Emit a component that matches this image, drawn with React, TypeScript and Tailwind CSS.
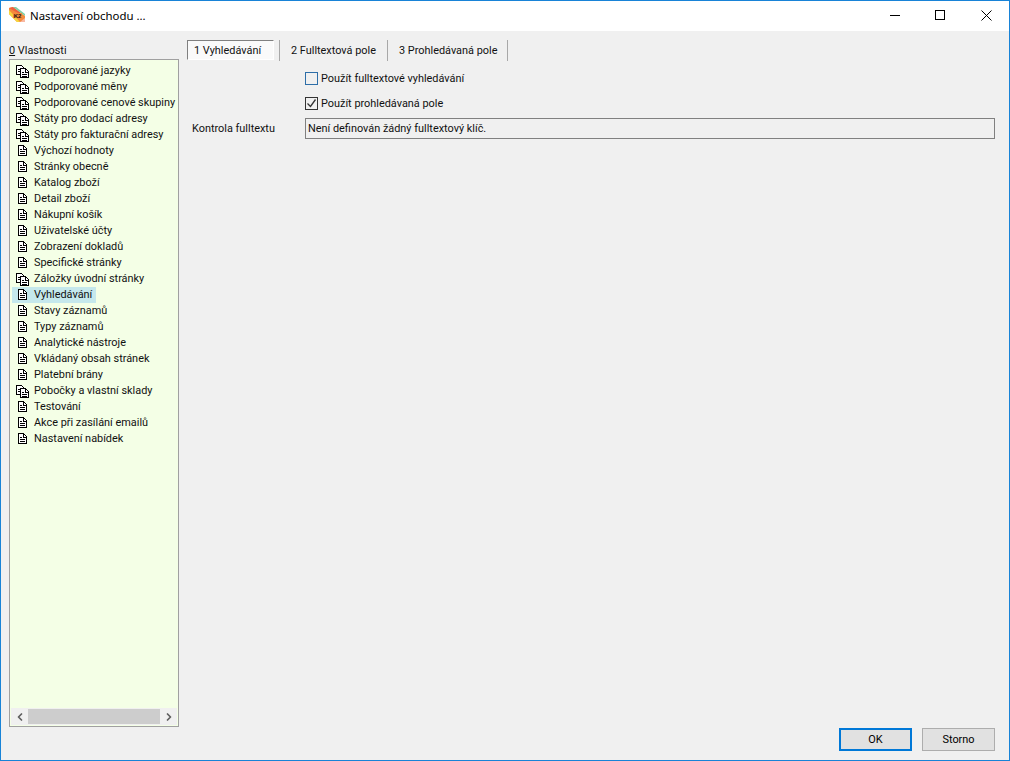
import { ChevronLeft, ChevronRight } from "lucide-react"

const items = [
  { label: "Podporované jazyky", multi: true },
  { label: "Podporované měny", multi: true },
  { label: "Podporované cenové skupiny", multi: true },
  { label: "Státy pro dodací adresy", multi: true },
  { label: "Státy pro fakturační adresy", multi: true },
  { label: "Výchozí hodnoty" },
  { label: "Stránky obecně" },
  { label: "Katalog zboží" },
  { label: "Detail zboží" },
  { label: "Nákupní košík" },
  { label: "Uživatelské účty" },
  { label: "Zobrazení dokladů" },
  { label: "Specifické stránky" },
  { label: "Záložky úvodní stránky", multi: true },
  { label: "Vyhledávání", active: true },
  { label: "Stavy záznamů" },
  { label: "Typy záznamů" },
  { label: "Analytické nástroje" },
  { label: "Vkládaný obsah stránek" },
  { label: "Platební brány" },
  { label: "Pobočky a vlastní sklady", multi: true },
  { label: "Testování" },
  { label: "Akce při zasílání emailů" },
  { label: "Nastavení nabídek" },
]

const DocIcon = () => (
  <svg width="16" height="16" viewBox="0 0 16 16" shapeRendering="crispEdges" className="shrink-0">
    <path d="M3.5 2.5h5l3 3v7h-8z" fill="#fff" stroke="#000" />
    <path d="M8 3v3h3M5 6.5h2M5 8.5h5M5 10.5h5" stroke="#000" fill="none" />
  </svg>
)

const DocsIcon = () => (
  <svg width="16" height="16" viewBox="0 0 16 16" shapeRendering="crispEdges" className="shrink-0">
    <path d="M1.5 2.5h5l2 2v7h-7z" fill="#fff" stroke="#000" />
    <path d="M3 6.5h2M3 8.5h2" stroke="#000" />
    <path d="M5.5 5.5h5l3 3v6h-8z" fill="#fff" stroke="#000" />
    <path d="M10 6v3h3M7 9.5h2M7 11.5h5M7 13.5h5" stroke="#000" fill="none" />
  </svg>
)

const K2Logo = () => (
  <svg width="16" height="16" viewBox="0 0 16 16" className="shrink-0">
    <path d="M0 1L4 0L16 9V15H8L0 7z" fill="#f58a3c" />
    <path d="M0 3V7L8 15H11z" fill="#f5d63d" />
    <path d="M0 1L4 0L12 6L9 6z" fill="#ee5f3f" />
    <path d="M4 0L7 0L16 7V9z" fill="#7fcfa6" />
    <path d="M11 15L16 11V15z" fill="#f8b8a2" />
    <rect x="4" y="6" width="9" height="5" fill="#f58a3c" />
    <text x="8.5" y="10.6" textAnchor="middle" fontSize="6" fontWeight="700" fill="#1f1510" fontFamily="'Liberation Sans', sans-serif">K2</text>
  </svg>
)

export default function App() {
  return (
    <div className="w-[1010px] h-[761px] flex flex-col border border-[#1883d7] bg-[#f0f0f0] text-[10.9px] text-[#111] font-['Roboto','Liberation_Sans',sans-serif] overflow-hidden">
      {/* Title bar */}
      <div className="h-[30px] bg-white flex items-center shrink-0">
        <div className="ml-[8px] mb-[2px]"><K2Logo /></div>
        <span className="ml-[5px] text-[11.4px] font-['Noto_Sans',sans-serif] text-black">Nastavení obchodu ...</span>
        <div className="ml-auto flex items-center pb-[2px]">
          <div className="w-[44px] h-[28px] flex items-center justify-center">
            <div className="w-[10px] h-px bg-black" />
          </div>
          <div className="w-[46px] h-[28px] flex items-center justify-center">
            <div className="w-[10px] h-[10px] border border-black" />
          </div>
          <div className="w-[46px] h-[28px] flex items-center justify-center">
            <svg width="11" height="11" viewBox="0 0 11 11">
              <path d="M.5.5l10 10M10.5.5l-10 10" stroke="#000" fill="none" />
            </svg>
          </div>
        </div>
      </div>

      {/* Body */}
      <div className="flex-1 flex pl-[8px] pr-[14px] min-h-0">
        {/* Left list */}
        <div className="w-[170px] flex flex-col shrink-0 pb-[33px]">
          <div className="h-[28px] pt-[12px] leading-[16px] shrink-0"><span className="underline">0</span> Vlastnosti</div>
          <div className="flex-1 flex flex-col border border-[#a0a0a0] bg-[#f4ffe6] min-h-0 p-px">
            <div className="flex-1 pt-[2px]">
              {items.map((item) => (
                <div key={item.label} className="h-[16px] flex items-center whitespace-nowrap pl-px">
                  <div className={`flex items-center h-[16px] pl-[3px] pr-[4px] ${item.active ? "bg-[#c5e8ec]" : ""}`}>
                    {item.multi ? <DocsIcon /> : <DocIcon />}
                    <span className="ml-[3px] leading-[16px]">{item.label}</span>
                  </div>
                </div>
              ))}
            </div>
            <div className="h-[17px] bg-[#f0f0f0] flex items-center shrink-0">
              <div className="w-[17px] flex justify-center"><ChevronLeft size={12} strokeWidth={3.5} color="#606060" /></div>
              <div className="flex-1 h-[15px] bg-[#cdcdcd]" />
              <div className="w-[17px] flex justify-center"><ChevronRight size={12} strokeWidth={3.5} color="#606060" /></div>
            </div>
          </div>
        </div>

        {/* Right panel */}
        <div className="flex-1 flex flex-col ml-[8px] min-w-0">
          <div className="flex items-center h-[22px] mt-[8px] shrink-0">
            <div className="w-[87px] h-[20px] flex items-center pl-[6px] pt-[2px] bg-[#fafafa] border border-t-[#808080] border-l-[#808080] border-b-white border-r-white">1 Vyhledávání</div>
            <div className="w-px h-[21px] bg-[#a8a8a8] ml-[5px]" />
            <div className="w-[107px] pl-[11px] pt-[2px] whitespace-nowrap">2 Fulltextová pole</div>
            <div className="w-px h-[21px] bg-[#a8a8a8]" />
            <div className="w-[119px] pl-[11px] pt-[2px] whitespace-nowrap">3 Prohledávaná pole</div>
            <div className="w-px h-[21px] bg-[#a8a8a8]" />
          </div>

          <div className="flex items-center mt-[9px] ml-[118px] h-[16px]">
            <div className="w-[13px] h-[13px] border border-[#2d6ea8] bg-[#f0f0f0]" />
            <span className="ml-[3px] pt-[2px]">Použít fulltextové vyhledávání</span>
          </div>
          <div className="flex items-center mt-[9px] ml-[118px] h-[16px]">
            <div className="w-[13px] h-[13px] border border-[#333] bg-[#f0f0f0] flex items-center justify-center">
              <svg width="11" height="11" viewBox="0 0 11 11">
                <path d="M1.5 5.5l3 3 5-7" stroke="#333" strokeWidth="1.3" fill="none" />
              </svg>
            </div>
            <span className="ml-[3px] pt-[2px]">Použít prohledávaná pole</span>
          </div>

          <div className="flex items-center mt-[7px] h-[21px]">
            <span className="w-[118px] pl-[5px] pt-[2px] shrink-0">Kontrola fulltextu</span>
            <div className="flex-1 h-[21px] border border-[#808080] flex items-center pl-[2px] pt-[2px]">Není definován žádný fulltextový klíč.</div>
          </div>

          <div className="mt-auto mb-[9px] flex justify-end gap-[10px]">
            <button className="w-[73px] h-[23px] pt-[2px] bg-[#e1e1e1] border-2 border-[#0078d7] text-black">OK</button>
            <button className="w-[73px] h-[23px] pt-[2px] bg-[#e1e1e1] border border-[#adadad] text-black">Storno</button>
          </div>
        </div>
      </div>
    </div>
  )
}
